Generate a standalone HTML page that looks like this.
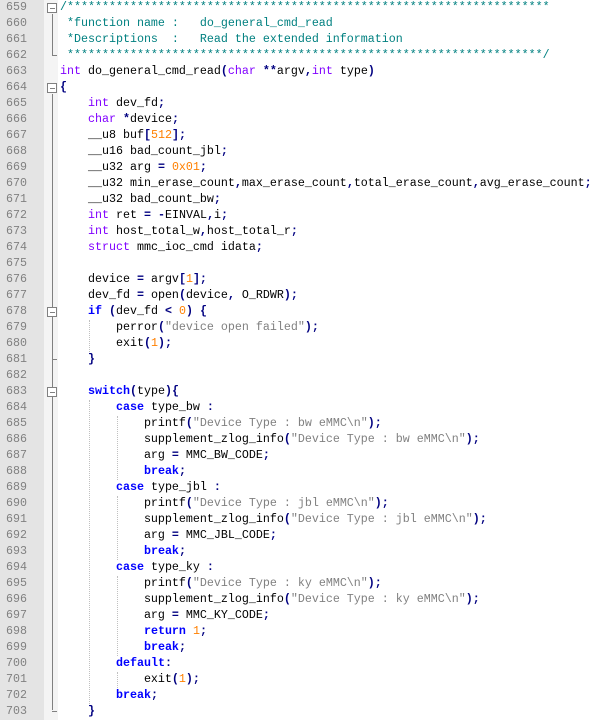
<!DOCTYPE html>
<html><head><meta charset="utf-8"><style>
html,body{margin:0;padding:0;width:600px;height:720px;overflow:hidden;background:#fff}
#ln{position:absolute;left:0;top:0;width:44px;height:720px;background:#e4e4e4}
#fm{position:absolute;left:44px;top:0;width:14px;height:720px;background:#f4f4f4}
.l{position:absolute;left:0;height:16px;line-height:16px;font:11.67px "Liberation Mono",monospace;white-space:pre}
.num{width:27px;text-align:right;color:#808080}
.code{left:60px;color:#000}
.k{color:#8000ff}.b{color:#0000ff;font-weight:bold}.o{color:#000080;font-weight:bold}
.n{color:#ff8000}.s{color:#808080}.c{color:#008080}
.box{position:absolute;left:47px;width:8px;height:8px;border:1px solid #808080;background:#fff}
.box:after{content:"";position:absolute;left:2px;top:4px;width:5px;height:1px;background:#808080}
.vl{position:absolute;left:52px;width:1px;background:#808080}
.hl{position:absolute;left:52px;width:5px;height:1px;background:#808080}
.g{position:absolute;width:0;border-left:1px dotted #c0c0c0}
</style></head><body>
<div id="ln"></div><div id="fm"></div>
<div class="box" style="top:3px"></div><div class="vl" style="top:14px;height:42px"></div><div class="hl" style="top:55px"></div>
<div class="box" style="top:83px"></div><div class="vl" style="top:94px;height:616px"></div><div class="hl" style="top:711px"></div>
<div class="box" style="top:307px;z-index:2"></div><div class="hl" style="top:359px"></div>
<div class="box" style="top:387px;z-index:2"></div>
<div class="g" style="left:89px;top:320px;height:32px"></div>
<div class="g" style="left:89px;top:400px;height:304px"></div>
<div class="g" style="left:117px;top:416px;height:64px"></div>
<div class="g" style="left:117px;top:496px;height:64px"></div>
<div class="g" style="left:117px;top:576px;height:80px"></div>
<div class="g" style="left:117px;top:672px;height:16px"></div>
<div id="lines"></div>
<script>
var L=[
'<span class="c">/*********************************************************************</span>',
'<span class="c"> *function name :   do_general_cmd_read</span>',
'<span class="c"> *Descriptions  :   Read the extended information</span>',
'<span class="c"> ********************************************************************/</span>',
'<span class="k">int</span> do_general_cmd_read<span class="o">(</span><span class="k">char</span> <span class="o">**</span>argv<span class="o">,</span><span class="k">int</span> type<span class="o">)</span>',
'<span class="o">{</span>',
'    <span class="k">int</span> dev_fd<span class="o">;</span>',
'    <span class="k">char</span> <span class="o">*</span>device<span class="o">;</span>',
'    __u8 buf<span class="o">[</span><span class="n">512</span><span class="o">];</span>',
'    __u16 bad_count_jbl<span class="o">;</span>',
'    __u32 arg <span class="o">=</span> <span class="n">0x01</span><span class="o">;</span>',
'    __u32 min_erase_count<span class="o">,</span>max_erase_count<span class="o">,</span>total_erase_count<span class="o">,</span>avg_erase_count<span class="o">;</span>',
'    __u32 bad_count_bw<span class="o">;</span>',
'    <span class="k">int</span> ret <span class="o">=</span> <span class="o">-</span>EINVAL<span class="o">,</span>i<span class="o">;</span>',
'    <span class="k">int</span> host_total_w<span class="o">,</span>host_total_r<span class="o">;</span>',
'    <span class="k">struct</span> mmc_ioc_cmd idata<span class="o">;</span>',
'',
'    device <span class="o">=</span> argv<span class="o">[</span><span class="n">1</span><span class="o">];</span>',
'    dev_fd <span class="o">=</span> open<span class="o">(</span>device<span class="o">,</span> O_RDWR<span class="o">);</span>',
'    <span class="b">if</span> <span class="o">(</span>dev_fd <span class="o">&lt;</span> <span class="n">0</span><span class="o">)</span> <span class="o">{</span>',
'        perror<span class="o">(</span><span class="s">"device open failed"</span><span class="o">);</span>',
'        exit<span class="o">(</span><span class="n">1</span><span class="o">);</span>',
'    <span class="o">}</span>',
'',
'    <span class="b">switch</span><span class="o">(</span>type<span class="o">){</span>',
'        <span class="b">case</span> type_bw <span class="o">:</span>',
'            printf<span class="o">(</span><span class="s">"Device Type : bw eMMC\\n"</span><span class="o">);</span>',
'            supplement_zlog_info<span class="o">(</span><span class="s">"Device Type : bw eMMC\\n"</span><span class="o">);</span>',
'            arg <span class="o">=</span> MMC_BW_CODE<span class="o">;</span>',
'            <span class="b">break</span><span class="o">;</span>',
'        <span class="b">case</span> type_jbl <span class="o">:</span>',
'            printf<span class="o">(</span><span class="s">"Device Type : jbl eMMC\\n"</span><span class="o">);</span>',
'            supplement_zlog_info<span class="o">(</span><span class="s">"Device Type : jbl eMMC\\n"</span><span class="o">);</span>',
'            arg <span class="o">=</span> MMC_JBL_CODE<span class="o">;</span>',
'            <span class="b">break</span><span class="o">;</span>',
'        <span class="b">case</span> type_ky <span class="o">:</span>',
'            printf<span class="o">(</span><span class="s">"Device Type : ky eMMC\\n"</span><span class="o">);</span>',
'            supplement_zlog_info<span class="o">(</span><span class="s">"Device Type : ky eMMC\\n"</span><span class="o">);</span>',
'            arg <span class="o">=</span> MMC_KY_CODE<span class="o">;</span>',
'            <span class="b">return</span> <span class="n">1</span><span class="o">;</span>',
'            <span class="b">break</span><span class="o">;</span>',
'        <span class="b">default</span><span class="o">:</span>',
'            exit<span class="o">(</span><span class="n">1</span><span class="o">);</span>',
'        <span class="b">break</span><span class="o">;</span>',
'    <span class="o">}</span>'
];
var h='';
for(var i=0;i<L.length;i++){
 h+='<div class="l num" style="top:'+(i*16)+'px">'+(659+i)+'</div>';
 h+='<div class="l code" style="top:'+(i*16)+'px">'+L[i]+'</div>';
}
document.getElementById('lines').innerHTML=h;
</script>
</body></html>
